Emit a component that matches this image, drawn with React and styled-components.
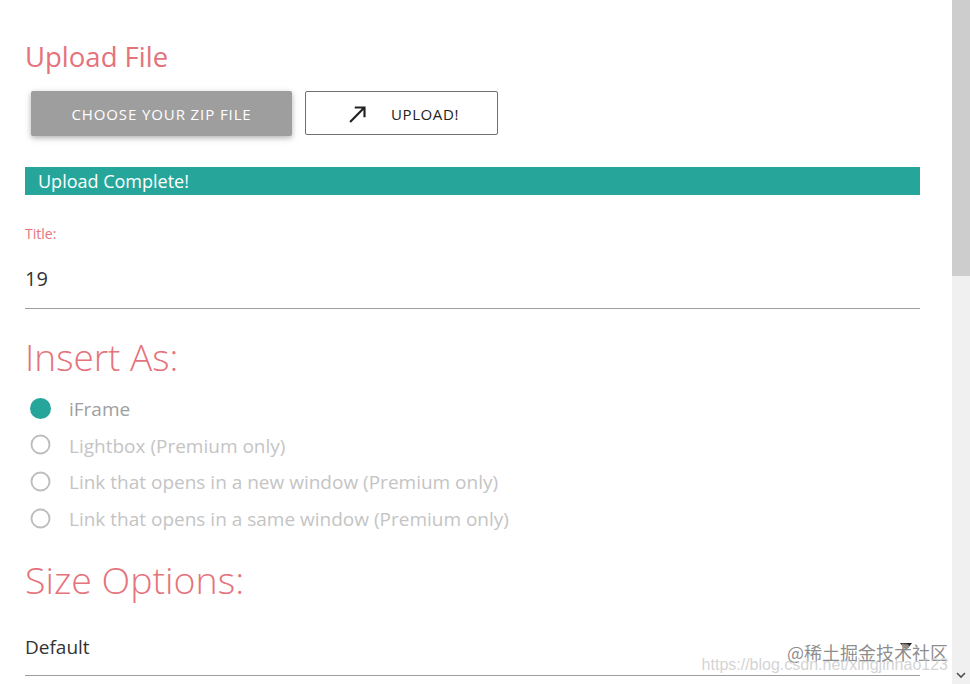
import React from "react";
import styled, { createGlobalStyle } from "styled-components";

const GlobalStyle = createGlobalStyle`
  html, body { margin: 0; padding: 0; overflow: hidden; background: #fff; }
  body { font-family: "Open Sans", "Noto Sans", sans-serif; color: #333; }
  * { box-sizing: border-box; }
`;

const Window = styled.div`
  display: flex;
  width: 970px;
  height: 684px;
  position: relative;
  overflow: hidden;
`;

const Page = styled.main`
  flex: 1;
  padding: 37px 32px 0 25px;
  overflow: hidden;
`;

const Scrollbar = styled.div`
  width: 18px;
  background: #f0f0f0;
  display: flex;
  flex-direction: column;
  align-items: center;
`;

const Thumb = styled.div`
  width: 18px;
  height: 276px;
  background: #cdcdcd;
`;

const ScrollSpacer = styled.div`
  flex: 1;
`;

const ScrollArrow = styled.div`
  height: 17px;
  display: flex;
  align-items: center;
  justify-content: center;
  color: #505050;
`;

const Heading = styled.h2`
  margin: ${(p) => p.$mt || 0}px 0 0;
  color: #e5737b;
  font-weight: ${(p) => (p.$light ? 300 : 400)};
  font-size: ${(p) => p.$size}px;
  line-height: ${(p) => p.$lh}px;
  letter-spacing: ${(p) => p.$ls || 0}px;
`;

const ButtonRow = styled.div`
  display: flex;
  gap: 13px;
  margin: 14px 0 0 6px;
`;

const FileButton = styled.button`
  width: 261px;
  height: 45px;
  border: none;
  border-radius: 2px;
  background: #9e9e9e;
  color: #fff;
  font-family: inherit;
  font-size: 15px;
  letter-spacing: 0.9px;
  text-transform: uppercase;
  padding-top: 2px;
  box-shadow: 0 2px 5px rgba(0, 0, 0, 0.22), 0 2px 10px rgba(0, 0, 0, 0.1);
`;

const UploadButton = styled.button`
  width: 193px;
  height: 44px;
  border: 1px solid #707070;
  border-radius: 2px;
  background: #fff;
  color: #222;
  font-family: inherit;
  font-size: 15px;
  letter-spacing: 0.6px;
  display: flex;
  align-items: center;
  padding: 2px 0 0 39px;
  gap: 20px;
`;

const StatusBar = styled.div`
  margin-top: 31px;
  height: 28px;
  background: #26a69a;
  color: #fff;
  font-size: 18px;
  line-height: 28px;
  padding-left: 13px;
`;

const FieldLabel = styled.div`
  margin-top: 29px;
  color: #e5737b;
  font-size: 14px;
  line-height: 20px;
`;

const Field = styled.div`
  padding: ${(p) => p.$pt}px 0 ${(p) => p.$pb}px;
  border-bottom: 1px solid #9e9e9e;
  font-size: ${(p) => p.$size}px;
  line-height: 28px;
  color: #333;
  display: flex;
  align-items: center;
  justify-content: space-between;
`;

const RadioList = styled.div`
  margin-top: 8px;
  display: flex;
  flex-direction: column;
`;

const RadioRow = styled.label`
  height: 36.6px;
  display: flex;
  align-items: center;
  padding-left: 5px;
  gap: 18px;
  font-size: 19px;
  color: ${(p) => (p.$active ? "#9e9e9e" : "#c4c4c4")};
`;

const RadioDot = styled.span`
  width: 21px;
  height: 21px;
  border-radius: 50%;
  flex: none;
  background: ${(p) => (p.$checked ? "#26a69a" : "transparent")};
  border: ${(p) => (p.$checked ? "none" : "2px solid #bdbdbd")};
  transform: ${(p) => (p.$checked ? "none" : "scale(0.95)")};
`;

const RadioText = styled.span`
  padding-top: 2px;
`;

const Caret = styled.span`
  width: 0;
  height: 0;
  margin-right: 8px;
  border-left: 6px solid transparent;
  border-right: 6px solid transparent;
  border-top: 8px solid #222;
`;

const Watermark = styled.div`
  position: absolute;
  right: 22px;
  bottom: 11px;
  display: flex;
  flex-direction: column;
  align-items: flex-end;
  pointer-events: none;
`;

const WatermarkBrand = styled.span`
  font-family: "Noto Sans CJK SC", "Noto Sans", sans-serif;
  font-size: 18px;
  line-height: 20px;
  color: rgba(120, 120, 120, 0.85);
  text-shadow: 0 0 2px #fff, 0 0 2px #fff;
`;

const WatermarkUrl = styled.span`
  font-family: "Liberation Sans", sans-serif;
  font-size: 16px;
  line-height: 16px;
  margin-top: -5px;
  color: rgba(200, 200, 200, 0.8);
`;

const ArrowIcon = () => (
  <svg width="26" height="26" viewBox="0 0 24 24" fill="#222">
    <path d="M9 5v2h6.59L4 18.59 5.41 20 17 8.41V15h2V5z" />
  </svg>
);

const options = [
  { label: "iFrame", checked: true, active: true },
  { label: "Lightbox (Premium only)" },
  { label: "Link that opens in a new window (Premium only)" },
  { label: "Link that opens in a same window (Premium only)" },
];

export default function App() {
  return (
    <>
      <GlobalStyle />
      <Window>
        <Page>
          <Heading $size={27.5} $lh={40}>Upload File</Heading>
          <ButtonRow>
            <FileButton>Choose your zip file</FileButton>
            <UploadButton>
              <ArrowIcon />
              <span>UPLOAD!</span>
            </UploadButton>
          </ButtonRow>
          <StatusBar>Upload Complete!</StatusBar>
          <FieldLabel>Title:</FieldLabel>
          <Field $pt={21} $pb={15} $size={20}>19</Field>
          <Heading $light $size={37} $lh={50} $mt={23}>Insert As:</Heading>
          <RadioList>
            {options.map((o) => (
              <RadioRow key={o.label} $active={o.active}>
                <RadioDot $checked={o.checked} />
                <RadioText>{o.label}</RadioText>
              </RadioRow>
            ))}
          </RadioList>
          <Heading $light $size={37.5} $lh={50} $mt={19}>Size Options:</Heading>
          <Field $pt={28} $pb={14} $size={19}>
            <span>Default</span>
            <Caret />
          </Field>
        </Page>
        <Scrollbar>
          <Thumb />
          <ScrollSpacer />
          <ScrollArrow>
            <svg width="10" height="7" viewBox="0 0 10 7">
              <path d="M1 1l4 4 4-4" stroke="#505050" strokeWidth="1.6" fill="none" />
            </svg>
          </ScrollArrow>
        </Scrollbar>
        <Watermark>
          <WatermarkBrand>@稀土掘金技术社区</WatermarkBrand>
          <WatermarkUrl>https://blog.csdn.net/xingjinhao123</WatermarkUrl>
        </Watermark>
      </Window>
    </>
  );
}
